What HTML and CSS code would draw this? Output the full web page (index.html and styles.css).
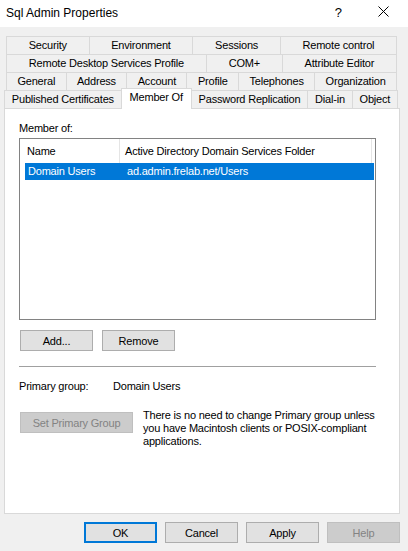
FILE: index.html
```html
<!DOCTYPE html>
<html lang="en">
<head>
    <meta charset="UTF-8">
    <title>Sql Admin Properties</title>
    <link rel="stylesheet" href="styles.css">
</head>
<body>

    <div class="titlebar">
        <span class="title">Sql Admin Properties</span>
        <span class="help-btn">?</span>
        <span class="close-btn">
            <svg width="11" height="11" viewBox="0 0 11 11">
                <path d="M0.5 0.5 L10.5 10.5 M10.5 0.5 L0.5 10.5" stroke="#000" stroke-width="1" fill="none"/>
            </svg>
        </span>
    </div>

    <!-- Onglets -->
    <div class="tabs">
        <div class="tab-row">
            <div class="tab">Security</div>
            <div class="tab">Environment</div>
            <div class="tab">Sessions</div>
            <div class="tab">Remote control</div>
        </div>
        <div class="tab-row">
            <div class="tab">Remote Desktop Services Profile</div>
            <div class="tab">COM+</div>
            <div class="tab">Attribute Editor</div>
        </div>
        <div class="tab-row">
            <div class="tab">General</div>
            <div class="tab">Address</div>
            <div class="tab">Account</div>
            <div class="tab">Profile</div>
            <div class="tab">Telephones</div>
            <div class="tab">Organization</div>
        </div>
        <div class="tab-row front">
            <div class="tab">Published Certificates</div>
            <div class="tab active">Member Of</div>
            <div class="tab">Password Replication</div>
            <div class="tab">Dial-in</div>
            <div class="tab">Object</div>
        </div>
    </div>

    <div class="panel">
        <div class="label">Member of:</div>

        <div class="listbox">
            <div class="list-header">
                <div class="col-name">Name</div>
                <div class="col-folder">Active Directory Domain Services Folder</div>
            </div>
            <div class="list-row selected">
                <div class="col-name">Domain Users</div>
                <div class="col-folder">ad.admin.frelab.net/Users</div>
            </div>
        </div>

        <div class="list-buttons">
            <button class="btn">Add...</button>
            <button class="btn">Remove</button>
        </div>

        <div class="separator"></div>

        <div class="primary-row">
            <span class="primary-label">Primary group:</span>
            <span>Domain Users</span>
        </div>

        <div class="set-primary">
            <button class="btn btn-wide" disabled>Set Primary Group</button>
            <p class="note">There is no need to change Primary group unless<br>you have Macintosh clients or POSIX-compliant<br>applications.</p>
        </div>
    </div>

    <div class="footer">
        <button class="btn default">OK</button>
        <button class="btn">Cancel</button>
        <button class="btn">Apply</button>
        <button class="btn" disabled>Help</button>
    </div>

</body>
</html>
```

FILE: styles.css
```css
body {
    font-family: "Liberation Sans", Arial, sans-serif;
    font-size: 11px;
    letter-spacing: -0.2px;
    margin: 0;
    padding: 0;
    background-color: #f0f0f0;
    color: #000;
}

.titlebar {
    background-color: #fff;
    height: 27px;
    display: flex;
    align-items: center;
    letter-spacing: 0;
}

.title {
    font-size: 12px;
    margin-left: 6px;
    flex: 1;
    padding-bottom: 2px;
}

.help-btn {
    font-size: 13px;
    margin-right: 36px;
    padding-bottom: 3px;
}

.close-btn {
    display: flex;
    margin-right: 19px;
    padding-bottom: 4px;
}

.tabs {
    margin-top: 9px;
}

.tab-row {
    display: flex;
    height: 18px;
    margin-left: 6px;
    width: 391px;
}

.tab-row.front {
    margin-left: 4px;
    width: 394px;
}

.tab {
    flex: 1 1 auto;
    box-sizing: border-box;
    height: 18px;
    border-top: 1px solid #d9d9d9;
    border-right: 1px solid #d9d9d9;
    text-align: center;
    line-height: 17px;
    white-space: nowrap;
}

.tab:first-child {
    border-left: 1px solid #d9d9d9;
}

.tab.active {
    position: relative;
    z-index: 1;
    flex: 0 0 71px;
    height: 21px;
    margin-top: -2px;
    margin-left: -1px;
    background-color: #fff;
    border-left: 1px solid #d9d9d9;
    line-height: 16px;
}

.panel {
    box-sizing: border-box;
    margin-left: 4px;
    width: 396px;
    height: 406px;
    background-color: #fff;
    border: 1px solid #d9d9d9;
    padding: 12px 0 0 14px;
}

.label {
    line-height: 14px;
}

.listbox {
    box-sizing: border-box;
    margin-top: 3px;
    width: 357px;
    height: 182px;
    border: 1px solid #828282;
}

.list-header {
    display: flex;
    height: 24px;
    line-height: 24px;
}

.list-header .col-name {
    width: 100px;
    padding-left: 7px;
    box-sizing: border-box;
    border-right: 1px solid #e5e5e5;
}

.list-header .col-folder {
    width: 252px;
    padding-left: 5px;
    box-sizing: border-box;
    border-right: 1px solid #e5e5e5;
}

.list-row {
    display: flex;
    height: 17px;
    line-height: 17px;
    margin: 0 1px 0 5px;
}

.list-row.selected {
    background-color: #0078d7;
    color: #fff;
}

.list-row .col-name {
    width: 96px;
    padding-left: 3px;
    box-sizing: border-box;
}

.list-row .col-folder {
    padding-left: 6px;
}

.list-buttons {
    display: flex;
    gap: 9px;
    margin: 10px 0 0 1px;
}

.btn {
    font-family: "Liberation Sans", Arial, sans-serif;
    font-size: 11px;
    letter-spacing: -0.2px;
    color: #000;
    box-sizing: border-box;
    width: 73px;
    height: 21px;
    padding: 0;
    background-color: #e1e1e1;
    border: 1px solid #adadad;
    border-radius: 0;
}

.btn:disabled {
    background-color: #cccccc;
    border-color: #bfbfbf;
    color: #838383;
}

.btn.default {
    border: 2px solid #0078d7;
}

.btn-wide {
    width: 113px;
    margin: 3px 0 0 1px;
}

.separator {
    width: 357px;
    height: 1px;
    background-color: #a0a0a0;
    margin-top: 15px;
}

.primary-row {
    display: flex;
    line-height: 14px;
    margin-top: 12px;
}

.primary-label {
    width: 94px;
}

.set-primary {
    display: flex;
    align-items: flex-start;
    margin-top: 16px;
}

.note {
    margin: 0 0 0 10px;
    line-height: 13px;
    white-space: nowrap;
}

.footer {
    display: flex;
    justify-content: flex-end;
    gap: 8px;
    margin-top: 8px;
    padding-right: 8px;
}
```
